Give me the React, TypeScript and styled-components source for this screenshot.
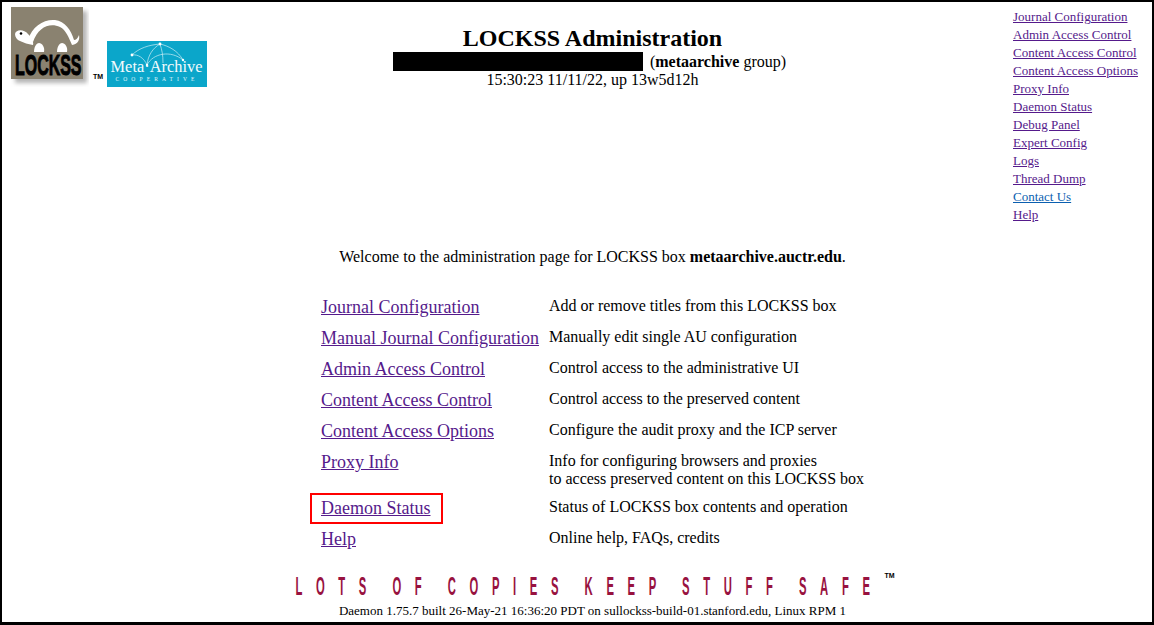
import React from "react";
import styled, { createGlobalStyle } from "styled-components";

const Global = createGlobalStyle`
  html, body { margin: 0; padding: 0; background: #fff; }
  body { font-family: "Liberation Serif", "Times New Roman", serif; color: #000; }
`;

const Frame = styled.div`
  box-sizing: border-box;
  width: 1154px;
  height: 625px;
  border: 2px solid #000;
  border-bottom-width: 3px;
  background: #fff;
  overflow: hidden;
  display: flex;
  flex-direction: column;
`;

const Header = styled.header`
  display: grid;
  grid-template-columns: 196px 771px 1fr;
  padding: 5px 0 0 9px;
`;

const Logos = styled.div`
  display: flex;
  align-items: flex-start;
`;

const LockssLogo = styled.svg`
  flex: none;
  width: 78px;
  height: 80px;
`;

const Tm = styled.span`
  flex: none;
  width: 14px;
  margin: 66px 0 0 4px;
  font: 700 7px "Liberation Sans", Arial, sans-serif;
`;

const MetaLogo = styled.svg`
  flex: none;
  width: 100px;
  height: 46px;
  margin-top: 34px;
`;

const Center = styled.div`
  text-align: center;
  padding-top: 17px;
  font-size: 16px;
  line-height: 18px;
`;

const Title = styled.h1`
  margin: 0;
  font-size: 24px;
  line-height: 28px;
  font-weight: 700;
`;

const UserLine = styled.div`
  display: flex;
  justify-content: center;
  align-items: center;
  height: 19px;
  padding-right: 6px;
`;

const Redacted = styled.span`
  width: 250px;
  height: 19px;
  background: #000;
  margin-right: 7px;
`;

const SideNav = styled.nav`
  display: flex;
  flex-direction: column;
  padding: 1px 0 0 35px;
  font-size: 13px;
  line-height: 18px;
`;

const SideLink = styled.a<{ $contact?: boolean }>`
  color: ${(p) => (p.$contact ? "#0b5fb0" : "#551a8b")};
  text-decoration: underline;
`;

const Main = styled.main`
  flex: 1;
  padding-left: 31px;
  display: flex;
  flex-direction: column;
  align-items: center;
`;

const Welcome = styled.p`
  margin: 24px 0 31px;
  font-size: 16px;
  line-height: 18px;
`;

const Items = styled.div`
  display: grid;
  grid-template-columns: 228px 315px;
`;

const ItemLink = styled.div<{ $tall?: boolean }>`
  min-height: ${(p) => (p.$tall ? 46 : 31)}px;
  line-height: 21px;
  font-size: 18px;
  position: relative;
`;

const Anchor = styled.a<{ $marked?: boolean }>`
  color: #551a8b;
  text-decoration: underline;
  ${(p) =>
    p.$marked
      ? `&::after {
    content: "";
    position: absolute;
    left: -11px;
    top: -5px;
    width: 129px;
    height: 27px;
    border: 2px solid #f00;
  }`
      : ""}
`;

const ItemText = styled.div`
  font-size: 16px;
  line-height: 18px;
  white-space: nowrap;
`;

const SloganRow = styled.div`
  position: relative;
  margin-top: auto;
  margin-bottom: 2px;
  width: 574px;
  height: 20px;
  display: flex;
  justify-content: center;
`;

const SloganText = styled.div`
  flex: none;
  color: #98123f;
  font: 700 25px/20px "Liberation Sans", Arial, sans-serif;
  letter-spacing: 30.3px;
  word-spacing: -9.5px;
  white-space: pre;
  transform: translateX(-3px) scaleX(0.45);
`;

const SloganMark = styled.span`
  position: absolute;
  top: -4px;
  right: -15px;
  font: 700 7px "Liberation Sans", Arial, sans-serif;
  color: #000;
`;

const Footer = styled.footer`
  font-size: 13px;
  line-height: 14px;
  padding: 6px 0 4px;
`;

const side = [
  "Journal Configuration",
  "Admin Access Control",
  "Content Access Control",
  "Content Access Options",
  "Proxy Info",
  "Daemon Status",
  "Debug Panel",
  "Expert Config",
  "Logs",
  "Thread Dump",
  "Contact Us",
  "Help",
];

const items: { name: string; lines: string[]; marked?: boolean }[] = [
  { name: "Journal Configuration", lines: ["Add or remove titles from this LOCKSS box"] },
  { name: "Manual Journal Configuration", lines: ["Manually edit single AU configuration"] },
  { name: "Admin Access Control", lines: ["Control access to the administrative UI"] },
  { name: "Content Access Control", lines: ["Control access to the preserved content"] },
  { name: "Content Access Options", lines: ["Configure the audit proxy and the ICP server"] },
  {
    name: "Proxy Info",
    lines: ["Info for configuring browsers and proxies", "to access preserved content on this LOCKSS box"],
  },
  { name: "Daemon Status", lines: ["Status of LOCKSS box contents and operation"], marked: true },
  { name: "Help", lines: ["Online help, FAQs, credits"] },
];

export default function App() {
  return (
    <Frame>
      <Global />
      <Header>
        <Logos>
          <LockssLogo viewBox="0 0 78 80" aria-label="LOCKSS logo">
            <defs>
              <filter id="soft" x="-20%" y="-20%" width="140%" height="140%">
                <feGaussianBlur stdDeviation="2" />
              </filter>
            </defs>
            <rect x="4" y="4" width="72" height="72" fill="#b5b5b5" filter="url(#soft)" />
            <rect x="0" y="0" width="72" height="72" fill="#8a8270" />
            <path
              d="M17 33 C21 19 33 12 44 13 C54 14 60 23 63 33 C65 33 67 31 68 28 C69 33 67 37 61 38 C58 31 55 23 49 20 C39 15 27 20 22 35 Z"
              fill="#fff"
            />
            <path d="M4 27 C5 22 13 22 17 27 C21 31 23 36 22 38 C17 37 13 36 9 34 C6 33 4 30 4 27 Z" fill="#fff" />
            <circle cx="10" cy="26.5" r="1.3" fill="#000" />
            <path d="M23 45 C23 39 26 36 28 36 C31 36 34 40 33 45 Z" fill="#fff" />
            <path d="M46 45 C46 39 49 36 51 36 C54 36 57 40 56 45 Z" fill="#fff" />
            <text
              transform="translate(4 68) scale(0.55 1)"
              fontFamily="'Liberation Sans',Arial,sans-serif"
              fontWeight="700"
              fontSize="29"
              stroke="#000"
              strokeWidth="1"
              fill="#000"
            >
              LOCKSS
            </text>
          </LockssLogo>
          <Tm>TM</Tm>
          <MetaLogo viewBox="0 0 100 46" aria-label="MetaArchive Cooperative logo">
            <rect width="100" height="46" fill="#0ba6ca" />
            <g fill="none" stroke="#cdeef5" strokeWidth="0.7">
              <path d="M25 14 C32 7 42 4 53 3" />
              <path d="M25 14 C31 13 37 17 40 24" />
              <path d="M40 24 C41 14 46 7 53 3" />
              <path d="M53 3 C62 5 71 10 76 19" />
              <path d="M40 24 C46 12 64 9 76 19" />
              <path d="M53 3 C55 9 56 14 56 22" />
            </g>
            <g fill="#fff">
              <circle cx="25" cy="14" r="1.4" />
              <circle cx="53" cy="3" r="1.4" />
              <circle cx="76" cy="19" r="1.2" />
              <circle cx="40" cy="24" r="1.2" />
            </g>
            <text
              x="49.5"
              y="31"
              textAnchor="middle"
              fontFamily="'Liberation Serif',serif"
              fontSize="16.4"
              fill="#f2fbfd"
            >
              Meta·Archive
            </text>
            <text
              x="50"
              y="40"
              textAnchor="middle"
              fontFamily="'Liberation Serif',serif"
              fontSize="5.5"
              letterSpacing="4.15"
              fill="#e2f6fa"
            >
              COOPERATIVE
            </text>
          </MetaLogo>
        </Logos>
        <Center>
          <Title>LOCKSS Administration</Title>
          <UserLine>
            <Redacted />
            <span>
              (<b>metaarchive</b> group)
            </span>
          </UserLine>
          <div>15:30:23 11/11/22, up 13w5d12h</div>
        </Center>
        <SideNav>
          {side.map((s) => (
            <div key={s}>
              <SideLink href="#" $contact={s === "Contact Us"}>
                {s}
              </SideLink>
            </div>
          ))}
        </SideNav>
      </Header>
      <Main>
        <Welcome>
          Welcome to the administration page for LOCKSS box <b>metaarchive.auctr.edu</b>.
        </Welcome>
        <Items>
          {items.map((it) => (
            <React.Fragment key={it.name}>
              <ItemLink $tall={it.lines.length > 1}>
                <Anchor href="#" $marked={it.marked}>
                  {it.name}
                </Anchor>
              </ItemLink>
              <ItemText>
                {it.lines.map((l) => (
                  <div key={l}>{l}</div>
                ))}
              </ItemText>
            </React.Fragment>
          ))}
        </Items>
        <SloganRow>
          <SloganText>LOTS OF COPIES KEEP STUFF SAFE</SloganText>
          <SloganMark>TM</SloganMark>
        </SloganRow>
        <Footer>Daemon 1.75.7 built 26-May-21 16:36:20 PDT on sullockss-build-01.stanford.edu, Linux RPM 1</Footer>
      </Main>
    </Frame>
  );
}
